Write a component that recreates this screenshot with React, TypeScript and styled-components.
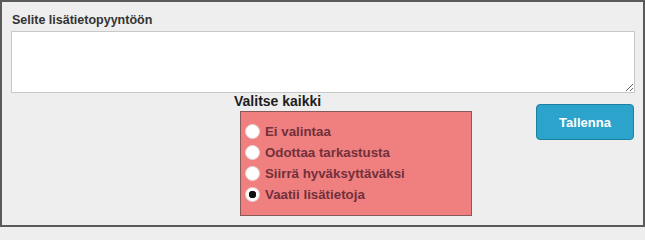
import styled, { createGlobalStyle } from "styled-components";

const GlobalStyle = createGlobalStyle`
  html, body {
    margin: 0;
    padding: 0;
    background: #eeeeee;
  }
  * {
    box-sizing: border-box;
  }
`;

const options = [
  "Ei valintaa",
  "Odottaa tarkastusta",
  "Siirrä hyväksyttäväksi",
  "Vaatii lisätietoja",
];

const App = (): JSX.Element => {
  return (
    <>
      <GlobalStyle />
      <StyledPanel>
        <FieldLabel htmlFor="selite">Selite lisätietopyyntöön</FieldLabel>
        <TextArea id="selite" />
        <BottomRow>
          <ChoiceGroup>
            <GroupTitle>Valitse kaikki</GroupTitle>
            <ChoiceBox>
              {options.map((o, i) => (
                <Choice key={o}>
                  <Radio
                    type="radio"
                    name="tila"
                    defaultChecked={i === options.length - 1}
                  />
                  {o}
                </Choice>
              ))}
            </ChoiceBox>
          </ChoiceGroup>
          <SaveButton>Tallenna</SaveButton>
        </BottomRow>
      </StyledPanel>
    </>
  );
};

export default App;

const StyledPanel = styled.div`
  width: 645px;
  height: 227px;
  border: 2px solid #5a5a5a;
  background: #eeeeee;
  padding: 10px 9px 0 9px;
  font-family: "Liberation Sans", Arial, sans-serif;
  display: flex;
  flex-direction: column;
`;

const FieldLabel = styled.label`
  display: block;
  font-size: 12.5px;
  font-weight: bold;
  color: #333333;
  line-height: 16px;
  margin: 0 0 3px 1px;
`;

const TextArea = styled.textarea`
  display: block;
  width: 624px;
  height: 62px;
  border: 1px solid #c8c8c8;
  background: #ffffff;
  margin: 0;
  resize: both;
`;

const BottomRow = styled.div`
  display: flex;
  align-items: flex-start;
`;

const ChoiceGroup = styled.div`
  margin-left: 223px;
  display: flex;
  flex-direction: column;
`;

const GroupTitle = styled.div`
  font-size: 14px;
  font-weight: bold;
  color: #1e1e1e;
  line-height: 17px;
`;

const ChoiceBox = styled.div`
  margin: 1px 0 0 6px;
  width: 232px;
  height: 105px;
  background: #f08080;
  border: 1px solid #875a5a;
  padding: 9px 0 0 4px;
  display: flex;
  flex-direction: column;
`;

const Choice = styled.label`
  display: flex;
  align-items: center;
  gap: 5px;
  height: 21px;
  font-size: 13.3px;
  font-weight: bold;
  color: #72303a;
`;

const Radio = styled.input`
  appearance: none;
  margin: 0;
  width: 15px;
  height: 15px;
  border-radius: 50%;
  background: #ffffff;
  border: 1px solid #e6d2d2;
  flex-shrink: 0;

  &:checked {
    background: radial-gradient(circle, #111111 0 3.5px, #ffffff 4px);
  }
`;

const SaveButton = styled.button`
  margin: 11px 0 0 auto;
  width: 98px;
  height: 36px;
  border-radius: 4px;
  border: 1px solid #1e7fa2;
  background: #2ca3cb;
  color: #ffffff;
  font-family: "Liberation Sans", Arial, sans-serif;
  font-size: 13px;
  font-weight: bold;
  cursor: pointer;
`;
